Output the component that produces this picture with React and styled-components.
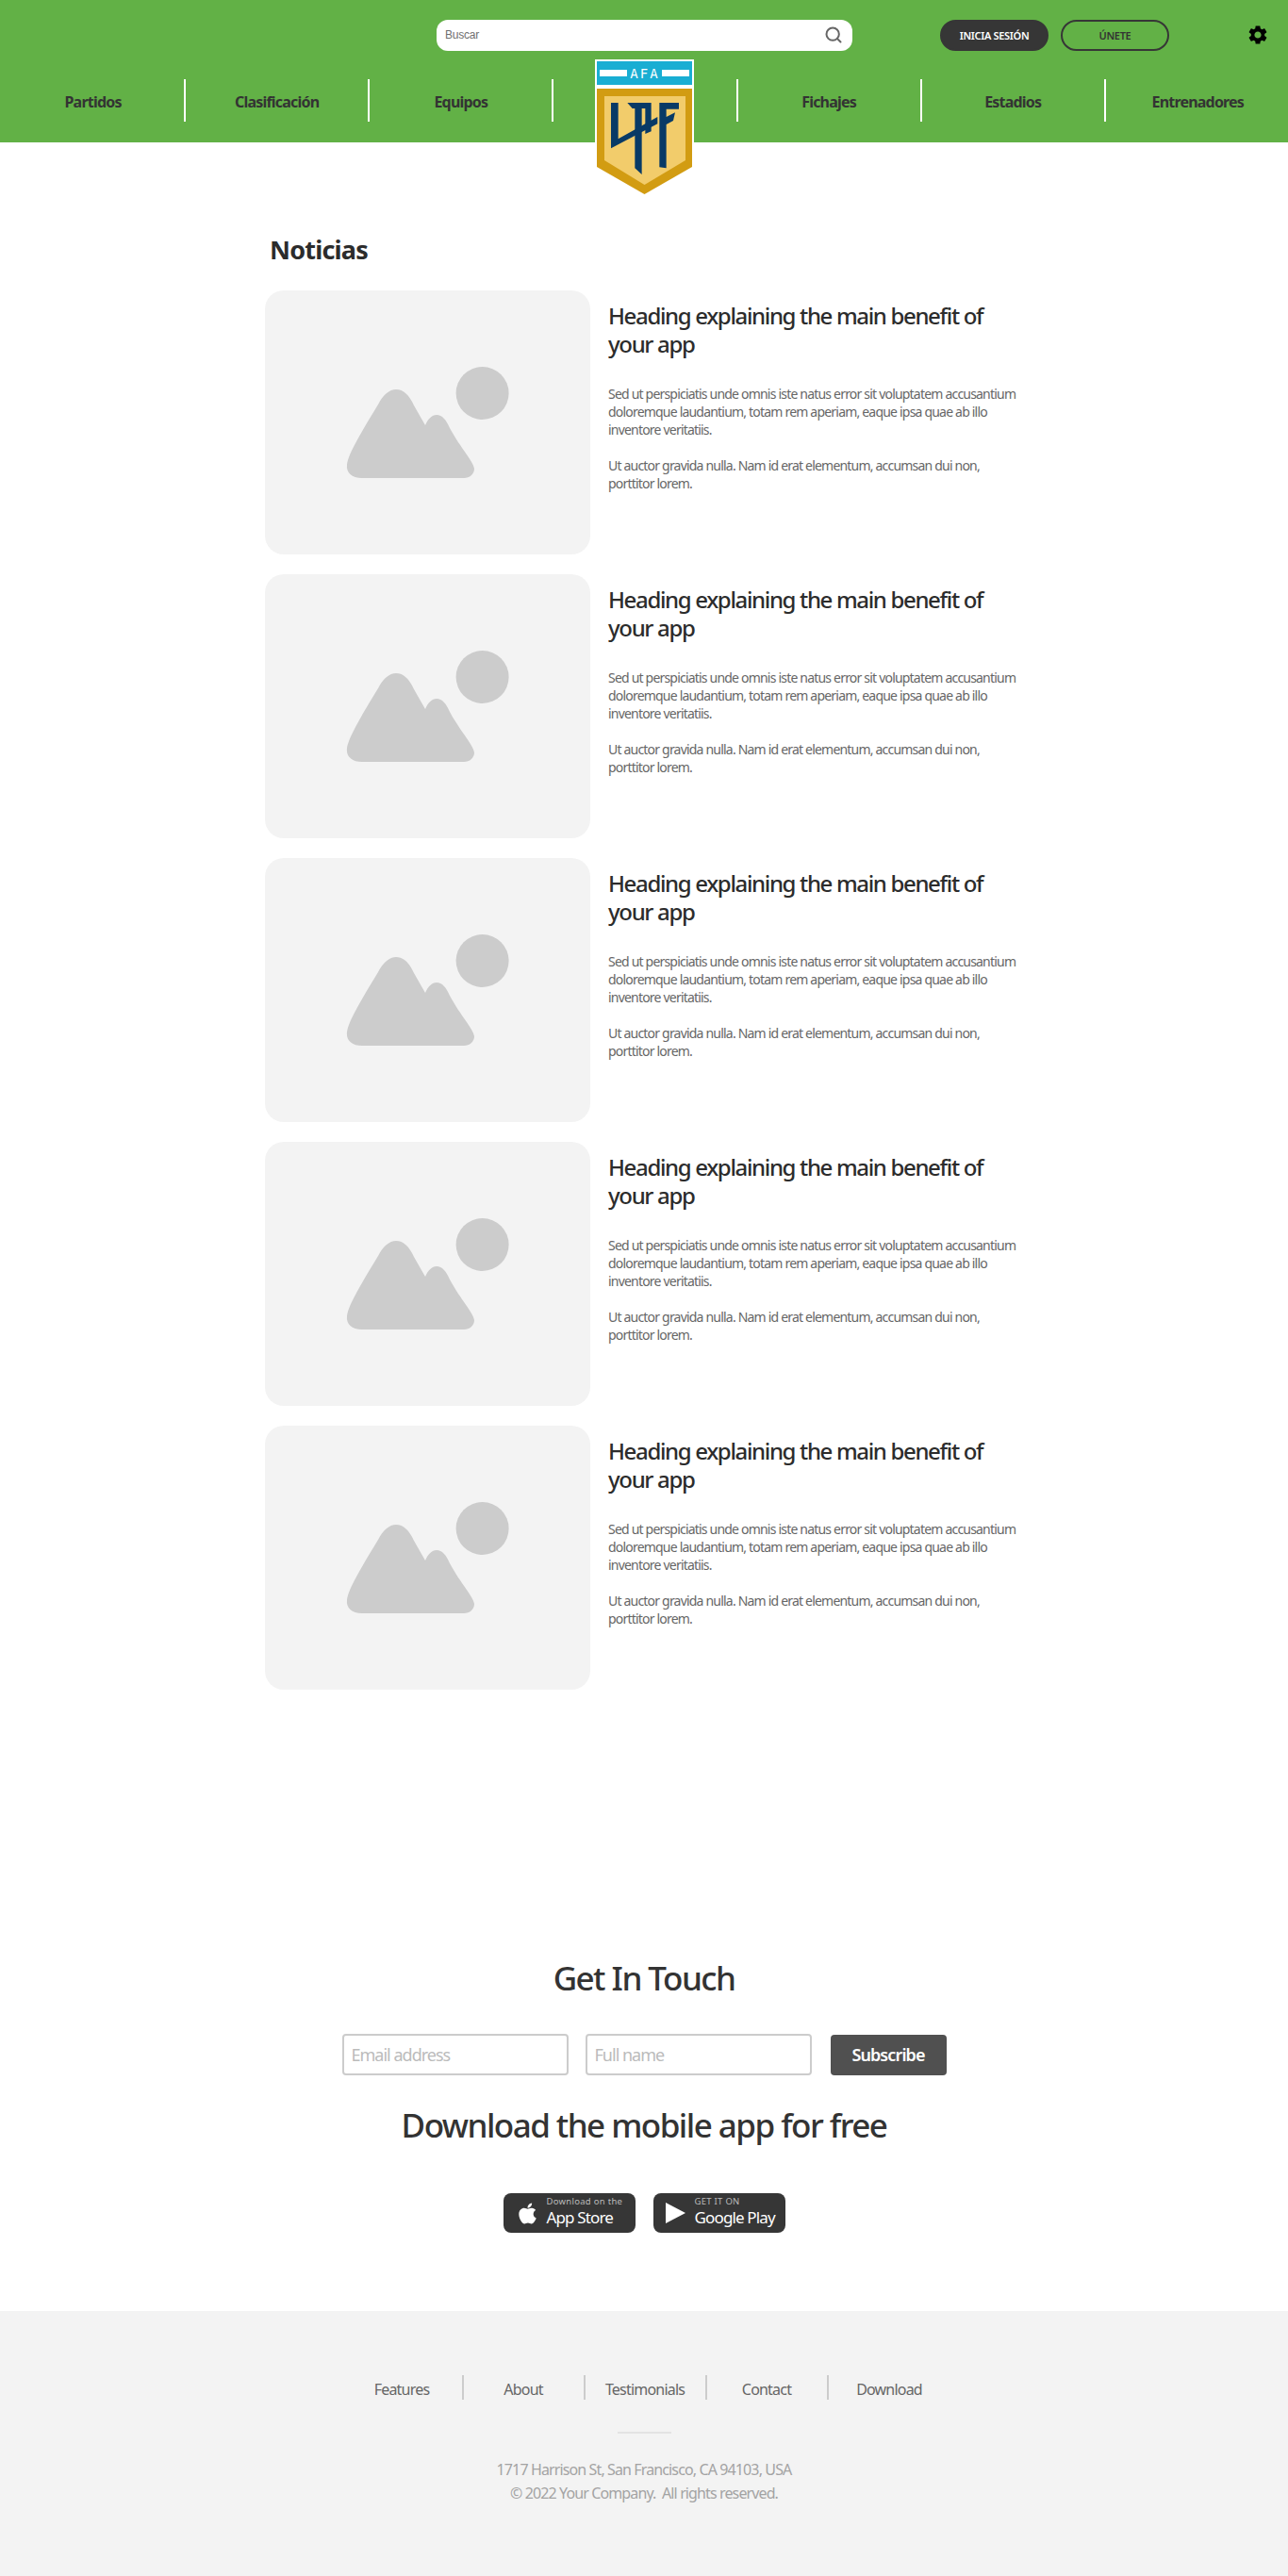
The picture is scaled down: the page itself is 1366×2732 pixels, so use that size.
import styled, { createGlobalStyle } from "styled-components";
import { Search } from "lucide-react";
import { FaApple } from "react-icons/fa";
import { MdSettings } from "react-icons/md";

const navItems = ["Partidos", "Clasificación", "Equipos", "", "Fichajes", "Estadios", "Entrenadores"];
const footerLinks = ["Features", "About", "Testimonials", "Contact", "Download"];
const news = [1, 2, 3, 4, 5];

const Shield = () => (
  <LogoSvg viewBox="0 0 105 143">
    <rect width="105" height="88" fill="#fff" />
    <rect x="2" y="2" width="101" height="25" fill="#19aed3" />
    <rect x="5" y="11" width="29" height="7" fill="#fff" />
    <rect x="71" y="11" width="29" height="7" fill="#fff" />
    <text x="53" y="19.5" textAnchor="middle" fontFamily="'DejaVu Sans Mono', monospace" fontSize="14" fill="#fff" letterSpacing="2">AFA</text>
    <polygon points="2,31 103,31 103,114 52.5,143 2,114" fill="#d29c12" />
    <polygon points="10,39 96,39 96,107 52.5,133 10,107" fill="#f2cc6b" />
    <g transform="translate(9 37) scale(0.3333)" fill="#083a66">
      <polygon points="24,27 47,27 47,142 172,72 172,94 24,172" />
      <polygon points="76,27 152,27 152,118 133,126 133,45 122,45 122,255 100,235 100,45 92,45" />
      <polygon points="178,27 240,27 240,47 200,47 200,72 228,58 222,84 200,96 200,235 178,232" />
    </g>
  </LogoSvg>
);

const PictureIcon = () => (
  <PictureSvg viewBox="0 0 173 118">
    <circle cx="144.6" cy="28" r="28" fill="#ccc" />
    <path
      d="M17 118C6 118 0 112 1 104C2 96 7 84 34 40C39 30 46 24 53 24C61 24 67 30 72 41L84 62C87 55 91 51 96 51C102 51 106 56 110 65C122 87 135 100 136 108C136 114 131 118 125 118Z"
      fill="#ccc"
    />
  </PictureSvg>
);

const App = () => {
  return (
    <Page>
      <GlobalStyle />
      <Header>
        <TopBar>
          <SearchBox>
            <SearchInput placeholder="Buscar" />
            <Search size={20} color="#666" strokeWidth={2.4} />
          </SearchBox>
          <LoginButton>INICIA SESIÓN</LoginButton>
          <JoinButton>ÚNETE</JoinButton>
          <Gear>
            <MdSettings size={24} color="#000" />
          </Gear>
        </TopBar>
        <Nav>
          {navItems.map((item, i) => (
            <NavItem key={i} $last={i === navItems.length - 1}>
              {item}
            </NavItem>
          ))}
        </Nav>
        <Shield />
      </Header>

      <News>
        <NewsTitle>Noticias</NewsTitle>
        <NewsList>
          {news.map((n) => (
            <Card key={n}>
              <Picture>
                <PictureIcon />
              </Picture>
              <CardBody>
                <CardTitle>Heading explaining the main benefit of your app</CardTitle>
                <CardText>
                  Sed ut perspiciatis unde omnis iste natus error sit voluptatem accusantium doloremque laudantium, totam rem aperiam, eaque ipsa quae ab illo inventore veritatiis.
                </CardText>
                <CardText>Ut auctor gravida nulla. Nam id erat elementum, accumsan dui non, porttitor lorem.</CardText>
              </CardBody>
            </Card>
          ))}
        </NewsList>
      </News>

      <Contact>
        <ContactTitle>Get In Touch</ContactTitle>
        <Form>
          <Field placeholder="Email address" />
          <Field placeholder="Full name" />
          <Subscribe>Subscribe</Subscribe>
        </Form>
        <DownloadTitle>Download the mobile app for free</DownloadTitle>
        <Badges>
          <Badge $gap="8px">
            <FaApple size={25} color="#fff" />
            <BadgeText>
              <BadgeSmall>Download on the</BadgeSmall>
              <BadgeBig>App Store</BadgeBig>
            </BadgeText>
          </Badge>
          <Badge $gap="10px">
            <svg width="21" height="22" viewBox="0 0 21 22">
              <polygon points="0,0 21,11 0,22" fill="#fff" />
            </svg>
            <BadgeText>
              <BadgeSmall>GET IT ON</BadgeSmall>
              <BadgeBig>Google Play</BadgeBig>
            </BadgeText>
          </Badge>
        </Badges>
      </Contact>

      <Footer>
        <FooterNav>
          {footerLinks.map((link, i) => (
            <FooterLink key={link} $last={i === footerLinks.length - 1}>
              {link}
            </FooterLink>
          ))}
        </FooterNav>
        <FooterRule />
        <FooterText>1717 Harrison St, San Francisco, CA 94103, USA</FooterText>
        <FooterText>© 2022 Your Company.&nbsp; All rights reserved.</FooterText>
      </Footer>
    </Page>
  );
};

const GlobalStyle = createGlobalStyle`
  body {
    margin: 0;
    background: #fff;
    font-family: "Noto Sans", "Open Sans", sans-serif;
    letter-spacing: -0.05em;
    color: #333;
  }
  * {
    box-sizing: border-box;
  }
`;

const Page = styled.div`
  width: 1366px;
`;

const Header = styled.header`
  position: relative;
  height: 151px;
  padding-top: 20px;
  background: #62b146;
`;

const TopBar = styled.div`
  display: flex;
  align-items: center;
  height: 34px;
  padding-left: 463px;
`;

const SearchBox = styled.div`
  display: flex;
  align-items: center;
  width: 441px;
  height: 33px;
  margin-right: 93px;
  padding: 0 10px 0 9px;
  background: #fff;
  border-radius: 12px;
`;

const SearchInput = styled.input`
  flex: 1;
  min-width: 0;
  padding: 0;
  border: 0;
  outline: 0;
  background: none;
  font-family: "Liberation Sans", sans-serif;
  font-size: 12px;
  letter-spacing: -0.02em;
  &::placeholder {
    color: #6f6f6f;
  }
`;

const LoginButton = styled.button`
  width: 115px;
  height: 33px;
  margin-right: 13px;
  border: 2px solid #363636;
  border-radius: 17px;
  background: #363636;
  color: #fff;
  font-family: inherit;
  font-size: 11px;
  font-weight: 600;
  letter-spacing: -0.03em;
`;

const JoinButton = styled(LoginButton)`
  margin-right: 0;
  background: transparent;
  color: #333;
`;

const Gear = styled.div`
  display: flex;
  margin-left: 82px;
`;

const Nav = styled.nav`
  display: grid;
  grid-template-columns: repeat(7, 195.14px);
  margin-top: 30px;
  padding-left: 2px;
`;

const NavItem = styled.div`
  display: flex;
  align-items: center;
  justify-content: center;
  height: 45px;
  padding-top: 2px;
  border-right: ${(p) => (p.$last ? "0" : "2px solid #fff")};
  font-size: 16px;
  font-weight: 700;
  color: #333;
`;

const LogoSvg = styled.svg`
  position: absolute;
  top: 63px;
  left: 631px;
  width: 105px;
  height: 143px;
`;

const News = styled.section`
  padding: 97px 0 0 281px;
`;

const NewsTitle = styled.h2`
  margin: 0 0 26px 5px;
  font-size: 27px;
  line-height: 34px;
  font-weight: 700;
  color: #2c2c2c;
`;

const NewsList = styled.div`
  display: flex;
  flex-direction: column;
  gap: 21px;
`;

const Card = styled.article`
  display: grid;
  grid-template-columns: 345px 440px;
  column-gap: 19px;
  height: 280px;
`;

const Picture = styled.div`
  display: flex;
  align-items: center;
  justify-content: center;
  background: #f3f3f3;
  border-radius: 20px;
`;

const PictureSvg = styled.svg`
  width: 173px;
  height: 118px;
`;

const CardBody = styled.div`
  padding-top: 12px;
`;

const CardTitle = styled.h3`
  margin: 0 0 28px;
  font-size: 24px;
  line-height: 30px;
  font-weight: 500;
  letter-spacing: -0.056em;
  color: #2c2c2c;
`;

const CardText = styled.p`
  margin: 0 0 19px;
  font-size: 14px;
  line-height: 19px;
  color: #666;
`;

const Contact = styled.section`
  display: flex;
  flex-direction: column;
  align-items: center;
  padding: 284px 0 83px;
`;

const ContactTitle = styled.h2`
  margin: 0;
  font-size: 35px;
  line-height: 44px;
  font-weight: 500;
  letter-spacing: -0.044em;
  color: #333;
`;

const Form = styled.div`
  display: flex;
  align-items: center;
  margin-top: 37px;
`;

const Field = styled.input`
  width: 240px;
  height: 44px;
  margin-right: 18px;
  padding: 0 8px;
  border: 2px solid #ccc;
  border-radius: 4px;
  outline: 0;
  font-family: inherit;
  font-size: 18px;
  letter-spacing: -0.055em;
  &::placeholder {
    color: #bbb;
  }
`;

const Subscribe = styled.button`
  width: 123px;
  height: 43px;
  margin-left: 2px;
  border: 0;
  border-radius: 4px;
  background: #505050;
  color: #fff;
  font-family: inherit;
  font-size: 18px;
  font-weight: 600;
  letter-spacing: -0.05em;
`;

const DownloadTitle = styled(ContactTitle)`
  margin-top: 31px;
`;

const Badges = styled.div`
  display: flex;
  gap: 19px;
  margin-top: 50px;
`;

const Badge = styled.div`
  display: flex;
  align-items: center;
  gap: ${(p) => p.$gap};
  width: 140px;
  height: 42px;
  padding-left: 13px;
  background: #363636;
  border-radius: 8px;
`;

const BadgeText = styled.div`
  display: flex;
  flex-direction: column;
`;

const BadgeSmall = styled.span`
  font-size: 9.5px;
  line-height: 10px;
  letter-spacing: 0.03em;
  color: #bbb;
`;

const BadgeBig = styled.span`
  font-size: 17px;
  line-height: 24px;
  letter-spacing: -0.05em;
  color: #fff;
`;

const Footer = styled.footer`
  display: flex;
  flex-direction: column;
  align-items: center;
  height: 281px;
  padding-top: 68px;
  background: #f3f3f3;
`;

const FooterNav = styled.nav`
  display: grid;
  grid-template-columns: repeat(5, 129px);
  margin-left: 4px;
`;

const FooterLink = styled.a`
  display: flex;
  align-items: center;
  justify-content: center;
  height: 26px;
  padding-top: 4px;
  border-right: ${(p) => (p.$last ? "0" : "2px solid #ccc")};
  font-size: 16px;
  color: #666;
`;

const FooterRule = styled.div`
  width: 57px;
  height: 2px;
  margin: 34px 0 26px;
  background: #e3e3e3;
`;

const FooterText = styled.p`
  margin: 0;
  font-size: 16px;
  line-height: 25px;
  letter-spacing: -0.055em;
  color: #a3a3a3;
`;

export default App;
